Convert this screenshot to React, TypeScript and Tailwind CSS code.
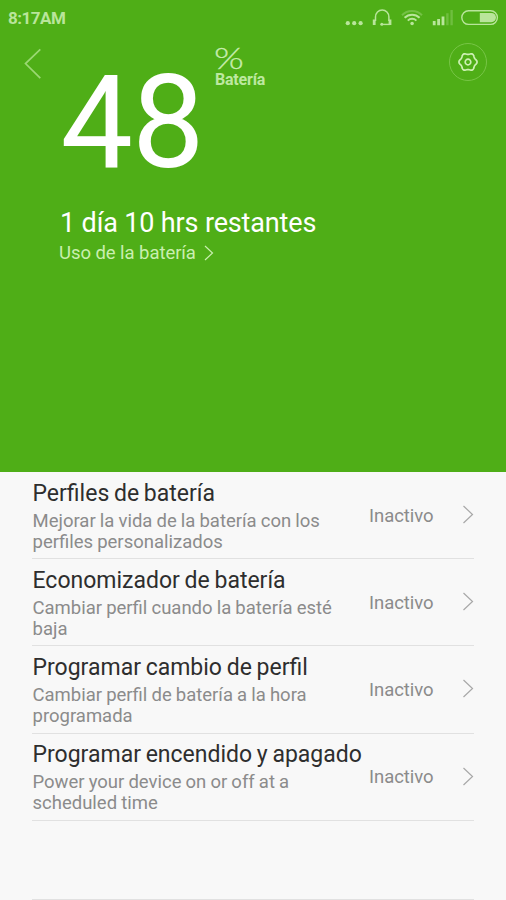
interface Setting {
  title: string
  description: [string, string]
  status: string
}

const settings: Setting[] = [
  {
    title: 'Perfiles de batería',
    description: ['Mejorar la vida de la batería con los', 'perfiles personalizados'],
    status: 'Inactivo',
  },
  {
    title: 'Economizador de batería',
    description: ['Cambiar perfil cuando la batería esté', 'baja'],
    status: 'Inactivo',
  },
  {
    title: 'Programar cambio de perfil',
    description: ['Cambiar perfil de batería a la hora', 'programada'],
    status: 'Inactivo',
  },
  {
    title: 'Programar encendido y apagado',
    description: ['Power your device on or off at a', 'scheduled time'],
    status: 'Inactivo',
  },
]

// six-lobed outline of the settings gear
const gearPoints = [...Array(72)]
  .map((_, i) => {
    const angle = (i * Math.PI) / 36
    const radius = 8.3 + 0.75 * Math.cos(6 * angle)
    return `${(radius * Math.cos(angle)).toFixed(2)},${(radius * Math.sin(angle)).toFixed(2)}`
  })
  .join(' ')

function StatusBar() {
  return (
    <div className="flex h-9 items-center justify-between pl-2 text-[#b9e59b]">
      <span className="text-[17px] font-bold leading-5 tracking-[-0.5px]">8:17AM</span>
      <svg width="166" height="36" viewBox="340 0 166 36" fill="none" stroke="currentColor">
        <g fill="currentColor" stroke="none">
          <circle cx="347.8" cy="23.2" r="2.1" />
          <circle cx="354.2" cy="23.2" r="2.1" />
          <circle cx="360.6" cy="23.2" r="2.1" />
        </g>

        {/* headset */}
        <path d="M375.5 21V17a6.7 7 0 0 1 13.4 0V21" strokeWidth="1.5" />
        <path d="M374.2 19.5v5.4M390 19.5v5.4" strokeWidth="2.8" />
        <path d="M390 24.4h-7" strokeWidth="1.4" />
        <circle cx="381.8" cy="24.3" r="1.5" fill="currentColor" stroke="none" />

        {/* wifi */}
        <path d="M402 15.2a14.2 14.2 0 0 1 20 0" strokeWidth="2" opacity="0.35" />
        <path d="M404.6 17.8a10.6 10.6 0 0 1 15 0" strokeWidth="2" />
        <path d="M407.8 20.6a6.2 6.2 0 0 1 8.6 0" strokeWidth="2" />
        <circle cx="412.1" cy="23.5" r="1.8" fill="currentColor" stroke="none" />

        {/* mobile signal */}
        <path d="M434.2 21v4.3M438.6 19v6.3M443 16.5v8.8" strokeWidth="2.8" />
        <path d="M447.4 13.2v12.1M451.6 10v15.3" strokeWidth="2.4" opacity="0.3" />

        <rect x="461.8" y="10.8" width="35.6" height="13.6" rx="6.8" strokeWidth="1.4" />
        <path d="M479.8 13h11.6a4.6 4.6 0 0 1 0 9.2h-11.6z" fill="currentColor" stroke="none" />
      </svg>
    </div>
  )
}

function Header() {
  return (
    <header className="h-[472px] bg-[#4fae17]">
      <StatusBar />

      <div className="flex items-start">
        <button className="mt-3 w-[60.5px] shrink-0 pl-[23px]" aria-label="Atrás">
          <svg width="20" height="32" viewBox="0 0 20 32" fill="none" stroke="#9bd873" strokeWidth="1.7">
            <path d="M17.3 1.3 2.5 15.6 17.3 30.2" />
          </svg>
        </button>
        <h1 className="mt-[22px] w-[153.5px] shrink-0 text-[129px] leading-[130px] tracking-[-1px] text-white">48</h1>
        <div className="mt-2 flex flex-col text-[#bde8a0]">
          <span className="w-6 origin-left scale-x-[1.32] font-['Lato',sans-serif] text-[29px] font-light leading-[28px] text-[#c6ecad] [-webkit-text-stroke:0.3px]">
            %
          </span>
          <span className="pl-px text-base font-bold leading-4 tracking-[-0.2px]">Batería</span>
        </div>
        <button className="ml-auto mt-1.5 mr-[18px]" aria-label="Ajustes">
          <svg width="40" height="40" viewBox="-20 -20 40 40" fill="none">
            <circle r="18.5" stroke="#77c546" strokeWidth="1" />
            <polygon points={gearPoints} stroke="#cdf0b4" strokeWidth="1.7" strokeLinejoin="round" />
            <circle r="2.8" stroke="#cdf0b4" strokeWidth="1.7" />
          </svg>
        </button>
      </div>

      <div className="mt-[19px] pl-[59px]">
        <p className="pl-px text-[27px] leading-8 tracking-[-0.15px] text-white">1 día 10 hrs restantes</p>
        <a className="flex items-center text-[18.5px] leading-7 tracking-[-0.06px] text-[#caefb0]">
          Uso de la batería
          <svg className="ml-2" width="10" height="18" viewBox="0 0 10 18" fill="none" stroke="currentColor" strokeWidth="1.2">
            <path d="M1 2 8.5 9 1 16" />
          </svg>
        </a>
      </div>
    </header>
  )
}

function SettingRow({ title, description, status }: Setting) {
  return (
    <li className="flex h-[87.2px] items-start border-b border-[#e1e1e1] pt-[6.8px]">
      <div className="w-[337px] shrink-0 whitespace-nowrap pl-[0.5px]">
        <h2 className="text-[23px] leading-[30.8px] [word-spacing:-1px] text-[#2e2e2e]">{title}</h2>
        <p className="mt-[1px] text-[18.5px] leading-[21px] [word-spacing:-0.5px] text-[#8b8b8b]">
          {description[0]}
          <br />
          {description[1]}
        </p>
      </div>
      <div className="mt-[23.8px] flex flex-1 items-center justify-between">
        <span className="pt-px text-[18.5px] leading-6 tracking-[-0.06px] text-[#8b8b8b]">{status}</span>
        <svg width="12" height="20" viewBox="0 0 12 20" fill="none" stroke="#a8a8a8" strokeWidth="1.2">
          <path d="M1.5 1 10.5 9.5 1.5 18" />
        </svg>
      </div>
    </li>
  )
}

export default function App() {
  return (
    <div className="flex h-[900px] w-[506px] flex-col overflow-hidden bg-[#f8f8f8] font-['Roboto',sans-serif]">
      <Header />
      <main className="flex flex-1 flex-col justify-between px-8">
        <ul>
          {settings.map((setting) => (
            <SettingRow key={setting.title} {...setting} />
          ))}
        </ul>
        <div className="h-px bg-[#e1e1e1]" />
      </main>
    </div>
  )
}
